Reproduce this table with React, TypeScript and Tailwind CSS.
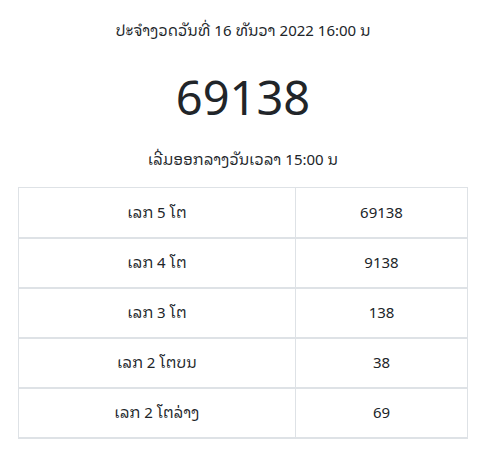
import React from 'react';

const rows = [
	{ label: 'ເລກ 5 ໂຕ', value: '69138' },
	{ label: 'ເລກ 4 ໂຕ', value: '9138' },
	{ label: 'ເລກ 3 ໂຕ', value: '138' },
	{ label: 'ເລກ 2 ໂຕບນ', value: '38' },
	{ label: 'ເລກ 2 ໂຕລ່າງ', value: '69' },
];

export default function App() {
	return (
		<div className="min-h-[464px] bg-white px-[18px] pt-[18px] text-center text-[#212529] font-['Noto_Sans','Noto_Sans_Lao_Looped','Noto_Sans_Lao','DejaVu_Sans',sans-serif]">
			{/* HEADER */}
			<p className="text-[15px] leading-6">ປະຈຳງວດວັນທີ່ 16 ທັນວາ 2022 16:00 ນ</p>

			<h1 className="mt-[26px] text-[47px] leading-[58px] font-normal">69138</h1>

			<p className="mt-[21px] text-[15px] leading-6">ເລີ່ມອອກລາງວັນເວລາ 15:00 ນ</p>

			{/* RESULTS */}
			<table className="mt-4 w-full border-collapse border border-[#dee2e6] text-[15px]">
				<tbody>
					{rows.map(r => (
						<tr key={r.label} className="h-[50px] border-b-2 border-[#dee2e6]">
							<td className="w-[277px] border-r border-[#dee2e6] align-middle">{r.label}</td>
							<td className="align-middle">{r.value}</td>
						</tr>
					))}
				</tbody>
			</table>
		</div>
	);
}
